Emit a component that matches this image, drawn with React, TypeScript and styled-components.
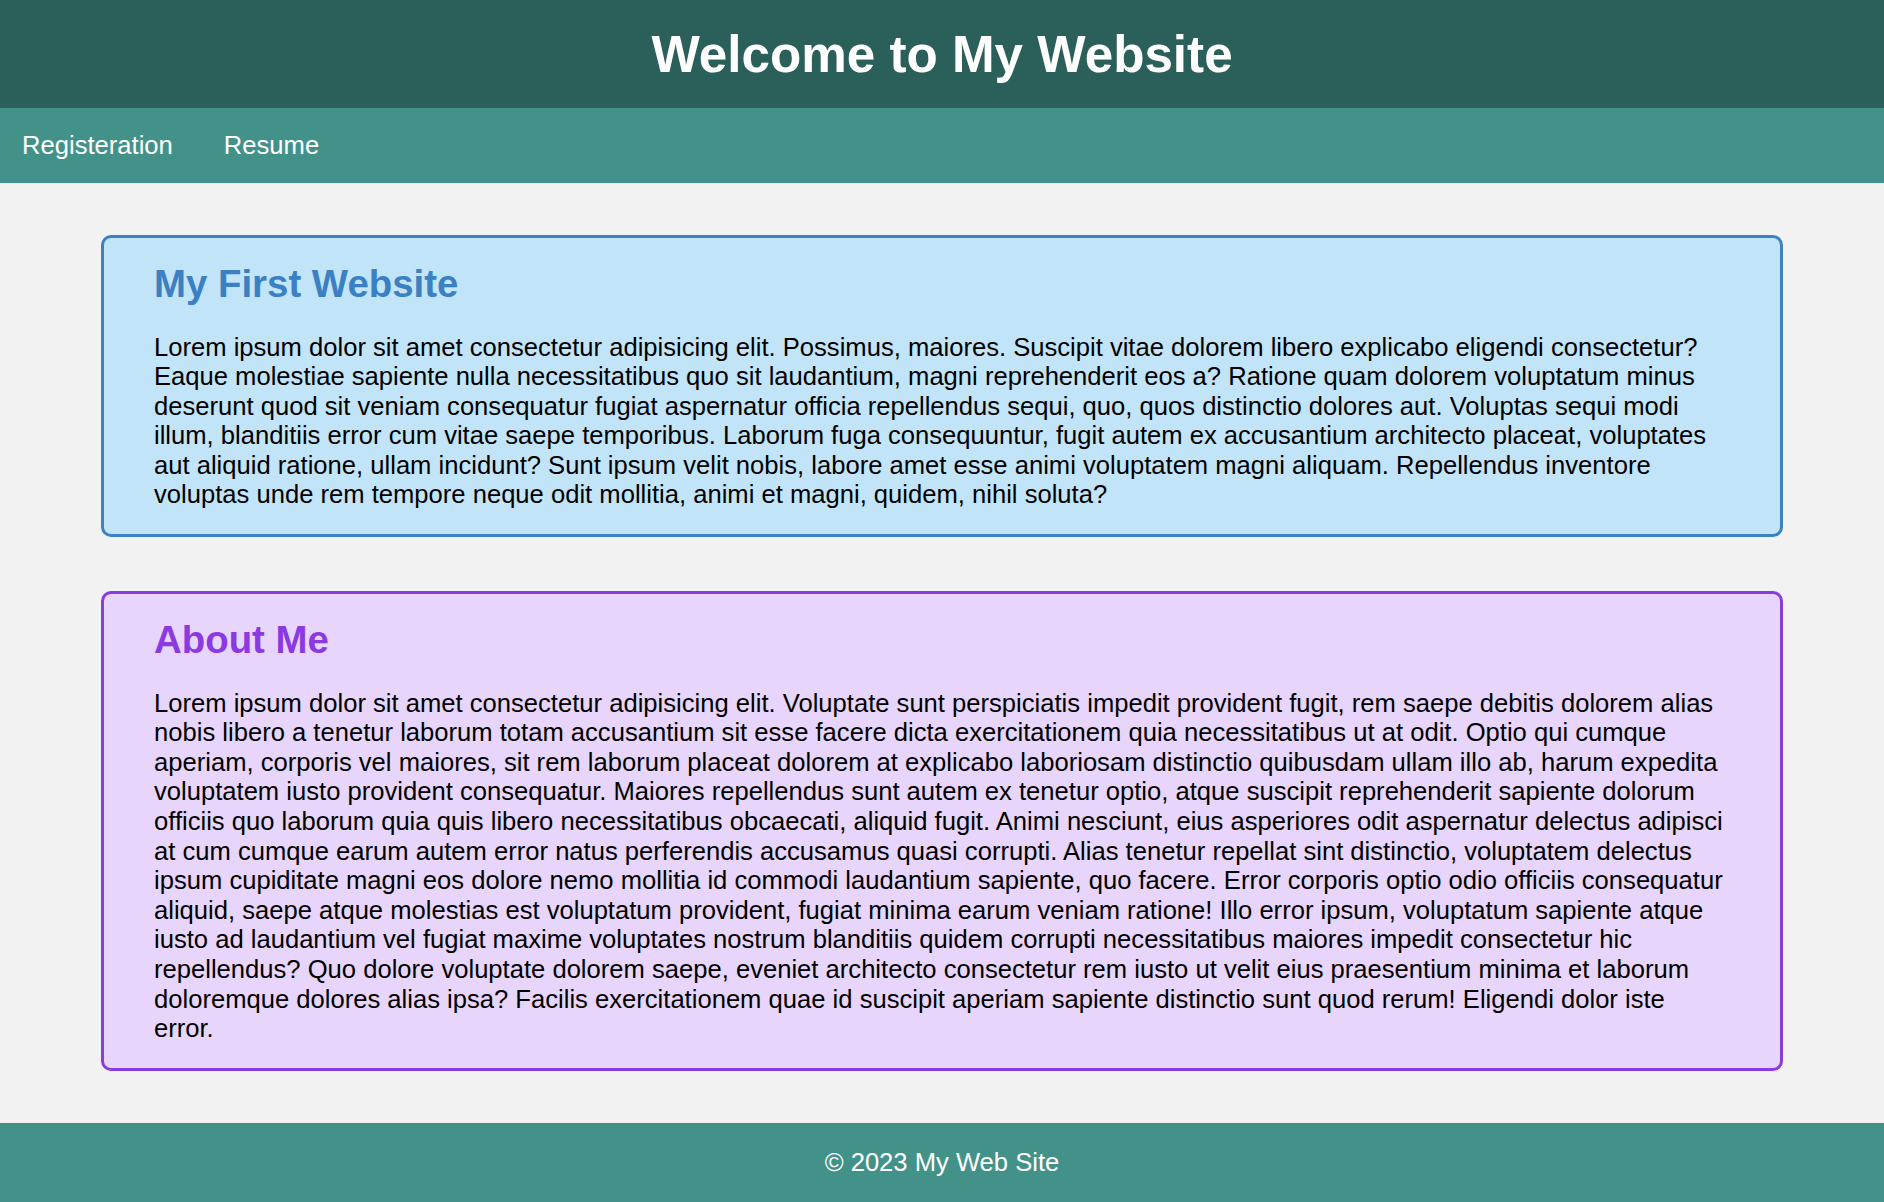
import React from "react";
import styled, { createGlobalStyle } from "styled-components";

const GlobalStyle = createGlobalStyle`
  * {
    box-sizing: border-box;
  }

  body {
    margin: 0;
    background-color: #f2f2f2;
    font-family: "Liberation Sans", Arial, Helvetica, sans-serif;
    color: #000000;
  }
`;

const Header = styled.header`
  padding: 25px 0 24px;
  background-color: #2b5f5a;
  text-align: center;
`;

const SiteTitle = styled.h1`
  margin: 0;
  font-size: 51.2px;
  line-height: 59px;
  font-weight: bold;
  color: #ffffff;
`;

const Nav = styled.nav`
  display: flex;
  gap: 51px;
  padding: 22px 22px 23px;
  background-color: #43928a;
`;

const NavLink = styled.a`
  font-size: 25.6px;
  line-height: 30px;
  color: #ffffff;
  text-decoration: none;

  &:hover {
    text-decoration: underline;
  }
`;

const Main = styled.main`
  display: flex;
  flex-direction: column;
  gap: 54px;
  padding: 52px 101px;
`;

type Tone = "blue" | "purple";

const tones: Record<Tone, { bg: string; border: string; title: string }> = {
  blue: { bg: "#c2e4f8", border: "#3a82c4", title: "#3a80c2" },
  purple: { bg: "#e7d5fb", border: "#8a3ce0", title: "#8a3ae0" },
};

const Card = styled.section<{ $tone: Tone }>`
  padding: 24px 50px;
  background-color: ${(p) => tones[p.$tone].bg};
  border: 3px solid ${(p) => tones[p.$tone].border};
  border-radius: 10px;
`;

const CardTitle = styled.h2<{ $tone: Tone }>`
  margin: 0 0 26.5px;
  font-size: 38.4px;
  line-height: 44px;
  font-weight: bold;
  color: ${(p) => tones[p.$tone].title};
`;

const CardText = styled.p`
  margin: 0;
  font-size: 25.6px;
  line-height: 29.6px;
`;

const Footer = styled.footer`
  padding: 24px 0 25px;
  background-color: #43928a;
  text-align: center;
  font-size: 25.6px;
  line-height: 30px;
  color: #ffffff;
`;

const firstText =
  "Lorem ipsum dolor sit amet consectetur adipisicing elit. Possimus, maiores. Suscipit vitae dolorem libero explicabo eligendi consectetur? Eaque molestiae sapiente nulla necessitatibus quo sit laudantium, magni reprehenderit eos a? Ratione quam dolorem voluptatum minus deserunt quod sit veniam consequatur fugiat aspernatur officia repellendus sequi, quo, quos distinctio dolores aut. Voluptas sequi modi illum, blanditiis error cum vitae saepe temporibus. Laborum fuga consequuntur, fugit autem ex accusantium architecto placeat, voluptates aut aliquid ratione, ullam incidunt? Sunt ipsum velit nobis, labore amet esse animi voluptatem magni aliquam. Repellendus inventore voluptas unde rem tempore neque odit mollitia, animi et magni, quidem, nihil soluta?";

const aboutText =
  "Lorem ipsum dolor sit amet consectetur adipisicing elit. Voluptate sunt perspiciatis impedit provident fugit, rem saepe debitis dolorem alias nobis libero a tenetur laborum totam accusantium sit esse facere dicta exercitationem quia necessitatibus ut at odit. Optio qui cumque aperiam, corporis vel maiores, sit rem laborum placeat dolorem at explicabo laboriosam distinctio quibusdam ullam illo ab, harum expedita voluptatem iusto provident consequatur. Maiores repellendus sunt autem ex tenetur optio, atque suscipit reprehenderit sapiente dolorum officiis quo laborum quia quis libero necessitatibus obcaecati, aliquid fugit. Animi nesciunt, eius asperiores odit aspernatur delectus adipisci at cum cumque earum autem error natus perferendis accusamus quasi corrupti. Alias tenetur repellat sint distinctio, voluptatem delectus ipsum cupiditate magni eos dolore nemo mollitia id commodi laudantium sapiente, quo facere. Error corporis optio odio officiis consequatur aliquid, saepe atque molestias est voluptatum provident, fugiat minima earum veniam ratione! Illo error ipsum, voluptatum sapiente atque iusto ad laudantium vel fugiat maxime voluptates nostrum blanditiis quidem corrupti necessitatibus maiores impedit consectetur hic repellendus? Quo dolore voluptate dolorem saepe, eveniet architecto consectetur rem iusto ut velit eius praesentium minima et laborum doloremque dolores alias ipsa? Facilis exercitationem quae id suscipit aperiam sapiente distinctio sunt quod rerum! Eligendi dolor iste error.";

const App = () => {
  return (
    <>
      <GlobalStyle />
      <Header>
        <SiteTitle>Welcome to My Website</SiteTitle>
      </Header>
      <Nav>
        <NavLink href="#registeration">Registeration</NavLink>
        <NavLink href="#resume">Resume</NavLink>
      </Nav>
      <Main>
        <Card $tone="blue">
          <CardTitle $tone="blue">My First Website</CardTitle>
          <CardText>{firstText}</CardText>
        </Card>
        <Card $tone="purple">
          <CardTitle $tone="purple">About Me</CardTitle>
          <CardText>{aboutText}</CardText>
        </Card>
      </Main>
      <Footer>&copy; 2023 My Web Site</Footer>
    </>
  );
};

export default App;
